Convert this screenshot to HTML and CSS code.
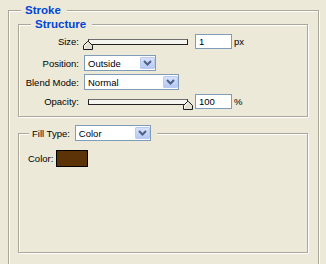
FILE: index.html
```html
<!DOCTYPE html>
<html lang="en">
<head>
    <meta charset="UTF-8">
    <title>Stroke</title>
    <link rel="stylesheet" href="styles.css">
</head>
<body>
    <fieldset class="group stroke">
        <legend class="title">Stroke</legend>

        <fieldset class="group structure">
            <legend class="title sub">Structure</legend>

            <div class="row">
                <span class="lbl">Size:</span>
                <div class="slider">
                    <div class="track"></div>
                    <svg class="thumb" style="left: 0px" width="10" height="9" viewBox="0 0 10 9">
                        <polygon points="0.5,4.5 4.5,0.5 5.5,0.5 9.5,4.5 9.5,8.5 0.5,8.5" fill="#e2dfd0" stroke="#1a1a1a"/>
                        <polyline points="1.5,7.5 1.5,4.9 4.9,1.5" fill="none" stroke="#fff"/>
                    </svg>
                </div>
                <div class="field">1</div>
                <span class="unit">px</span>
            </div>

            <div class="row loose">
                <span class="lbl">Position:</span>
                <div class="select pos">
                    <span class="val">Outside</span>
                    <span class="arrow"><svg width="9" height="6" viewBox="0 0 9 6"><polyline points="1,1 4.5,4.5 8,1" fill="none" stroke="#4d6185" stroke-width="2"/></svg></span>
                </div>
            </div>

            <div class="row tight">
                <span class="lbl">Blend Mode:</span>
                <div class="select blend">
                    <span class="val">Normal</span>
                    <span class="arrow"><svg width="9" height="6" viewBox="0 0 9 6"><polyline points="1,1 4.5,4.5 8,1" fill="none" stroke="#4d6185" stroke-width="2"/></svg></span>
                </div>
            </div>

            <div class="row">
                <span class="lbl">Opacity:</span>
                <div class="slider">
                    <div class="track"></div>
                    <svg class="thumb" style="left: 100px" width="10" height="9" viewBox="0 0 10 9">
                        <polygon points="0.5,4.5 4.5,0.5 5.5,0.5 9.5,4.5 9.5,8.5 0.5,8.5" fill="#e2dfd0" stroke="#1a1a1a"/>
                        <polyline points="1.5,7.5 1.5,4.9 4.9,1.5" fill="none" stroke="#fff"/>
                    </svg>
                </div>
                <div class="field">100</div>
                <span class="unit">%</span>
            </div>
        </fieldset>

        <fieldset class="group fill">
            <legend class="fill-legend">
                <span>Fill Type:</span>
                <div class="select type">
                    <span class="val">Color</span>
                    <span class="arrow"><svg width="9" height="6" viewBox="0 0 9 6"><polyline points="1,1 4.5,4.5 8,1" fill="none" stroke="#4d6185" stroke-width="2"/></svg></span>
                </div>
            </legend>

            <div class="color-row">
                <span>Color:</span>
                <div class="swatch"></div>
            </div>
        </fieldset>
    </fieldset>
</body>
</html>
```

FILE: styles.css
```css
html, body {
    margin: 0;
    overflow: hidden;
}
body {
    background: #ece9d8;
    font-family: "Liberation Sans", Arial, sans-serif;
    font-size: 9.5px;
    color: #000;
}

.group {
    margin: 0;
    min-width: 0;
    box-sizing: border-box;
    border: 1px solid #aca899;
    box-shadow: inset 1px 1px 0 #fff, 1px 1px 0 #fff;
}

.title {
    padding: 0 6px 0 4px;
    line-height: 13px;
    font-size: 11.5px;
    font-weight: bold;
    color: #0046d5;
    background: #ece9d8;
}

.stroke {
    margin: 4px 0 0 8px;
    width: 311px;
    height: 300px;
    padding: 1px 10px 0 9px;
}
.stroke > .title {
    margin-left: 3px;
}

.structure {
    padding: 3px 0 7px 0;
}
.structure > .title {
    margin-left: 12px;
}

.row {
    display: flex;
    align-items: center;
    height: 15px;
    margin-top: 4px;
}
.row:first-of-type {
    margin-top: 0;
}
.row.loose {
    margin-top: 6px;
    height: 16px;
}
.row.tight {
    margin-top: 3px;
    height: 16px;
}

.lbl {
    width: 60px;
    margin-right: 5px;
    text-align: right;
    white-space: nowrap;
}

.slider {
    position: relative;
    width: 110px;
    height: 15px;
    margin-left: -1px;
}
.track {
    box-sizing: border-box;
    height: 6px;
    margin: 5px 5px 0 5px;
    border: 1px solid #222;
    border-top-color: #6f6f6f;
    background: #f5f4ee;
}
.thumb {
    position: absolute;
    top: 7px;
    display: block;
}

.field {
    box-sizing: border-box;
    width: 37px;
    height: 15px;
    margin-left: 2px;
    padding: 0 3px;
    line-height: 13px;
    border: 1px solid #7f9db9;
    background: #fff;
}
.unit {
    margin-left: 2px;
}

.select {
    box-sizing: border-box;
    display: flex;
    align-items: center;
    justify-content: space-between;
    height: 16px;
    border: 1px solid #7f9db9;
    background: #fff;
}
.select .val {
    padding-left: 3px;
}
.select .arrow {
    box-sizing: border-box;
    display: flex;
    align-items: center;
    justify-content: center;
    width: 15px;
    height: 12px;
    margin-right: 0;
    border: 1px solid #b9cbf3;
    border-radius: 1px;
    background: linear-gradient(#d6e1fb, #b7c9f3);
}
.pos {
    width: 72px;
}
.blend {
    width: 95px;
}
.type {
    width: 76px;
}

.fill {
    margin-top: 8px;
    height: 128px;
    padding: 0 0 0 9px;
}
.fill-legend {
    display: flex;
    align-items: center;
    margin-left: 1px;
    padding: 0 6px 0 3px;
    background: #ece9d8;
}
.fill-legend .select {
    margin-left: 5px;
}

.color-row {
    display: flex;
    align-items: center;
    margin-top: 9px;
}
.swatch {
    box-sizing: border-box;
    width: 32px;
    height: 17px;
    margin-left: 3px;
    border: 1px solid #000;
    background: #5b3307;
}
```
